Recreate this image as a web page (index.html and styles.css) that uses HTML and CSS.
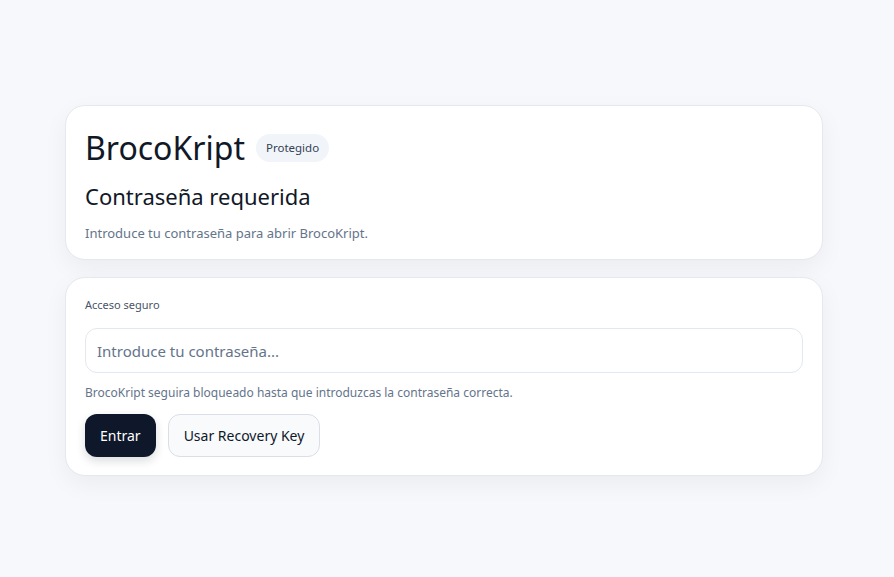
FILE: index.html
```html
<!DOCTYPE html>
<html lang="es">
<head>
    <meta charset="UTF-8">
    <meta name="viewport" content="width=device-width, initial-scale=1.0">
    <title>BrocoKript</title>
    <link rel="stylesheet" href="styles.css">
</head>
<body>
    <div class="container">
        <div class="card intro">
            <div class="title-row">
                <h1>BrocoKript</h1>
                <span class="badge">Protegido</span>
            </div>
            <h2>Contraseña requerida</h2>
            <p class="muted">Introduce tu contraseña para abrir BrocoKript.</p>
        </div>
        <div class="card">
            <label class="label" for="password">Acceso seguro</label>
            <input type="password" id="password" class="input" placeholder="Introduce tu contraseña...">
            <p class="hint">BrocoKript seguira bloqueado hasta que introduzcas la contraseña correcta.</p>
            <div class="actions">
                <button class="button primary">Entrar</button>
                <button class="button secondary">Usar Recovery Key</button>
            </div>
        </div>
    </div>
</body>
</html>
```

FILE: styles.css
```css
* {
    box-sizing: border-box;
}
body {
    font-family: "Noto Sans", "Open Sans", sans-serif;
    margin: 0;
    padding: 4px 6px 0 0;
    height: 100vh;
    display: flex;
    align-items: center;
    justify-content: center;
    background-color: #f7f8fb;
    color: #0f172a;
}
.container {
    width: 758px;
    display: flex;
    flex-direction: column;
    gap: 17px;
}
.card {
    background: #fff;
    border: 1px solid #e5e8ee;
    border-radius: 20px;
    padding: 19px 19px 18px;
    box-shadow: 0 8px 24px rgba(15, 23, 42, 0.05);
}
.intro {
    padding-top: 20px;
    padding-bottom: 17px;
}
.title-row {
    display: flex;
    align-items: center;
    gap: 11px;
}
h1 {
    margin: 0;
    font-size: 32px;
    font-weight: 400;
    line-height: 44px;
    color: #111827;
}
.badge {
    background: #f1f5f9;
    color: #334155;
    font-size: 11.5px;
    padding: 6px 10px;
    border-radius: 999px;
    line-height: 16px;
}
h2 {
    margin: 11px 0 0;
    font-size: 22px;
    font-weight: 400;
    line-height: 30px;
    color: #111827;
}
.muted {
    margin: 13px 0 0;
    font-size: 13px;
    line-height: 18px;
    color: #64748b;
}
.label {
    display: block;
    font-size: 11px;
    line-height: 16px;
    color: #475569;
    margin-top: 0;
}
.input {
    display: block;
    width: 100%;
    height: 45px;
    margin-top: 15px;
    padding: 0 11px;
    border: 1px solid #e2e8f0;
    border-radius: 12px;
    font-family: inherit;
    font-size: 15px;
    color: #0f172a;
    outline: none;
}
.input::placeholder {
    color: #64748b;
}
.hint {
    margin: 11px 0 0;
    font-size: 12px;
    line-height: 18px;
    color: #64748b;
}
.actions {
    display: flex;
    gap: 12px;
    margin-top: 12px;
}
.button {
    height: 43px;
    padding: 0 15px;
    border-radius: 12px;
    font-family: inherit;
    font-size: 14px;
    cursor: pointer;
}
.primary {
    background: #0f172a;
    color: #fff;
    border: none;
    box-shadow: 0 4px 10px rgba(15, 23, 42, 0.15);
}
.secondary {
    background: #f8fafc;
    color: #0f172a;
    border: 1px solid #d9dfe7;
}
```
